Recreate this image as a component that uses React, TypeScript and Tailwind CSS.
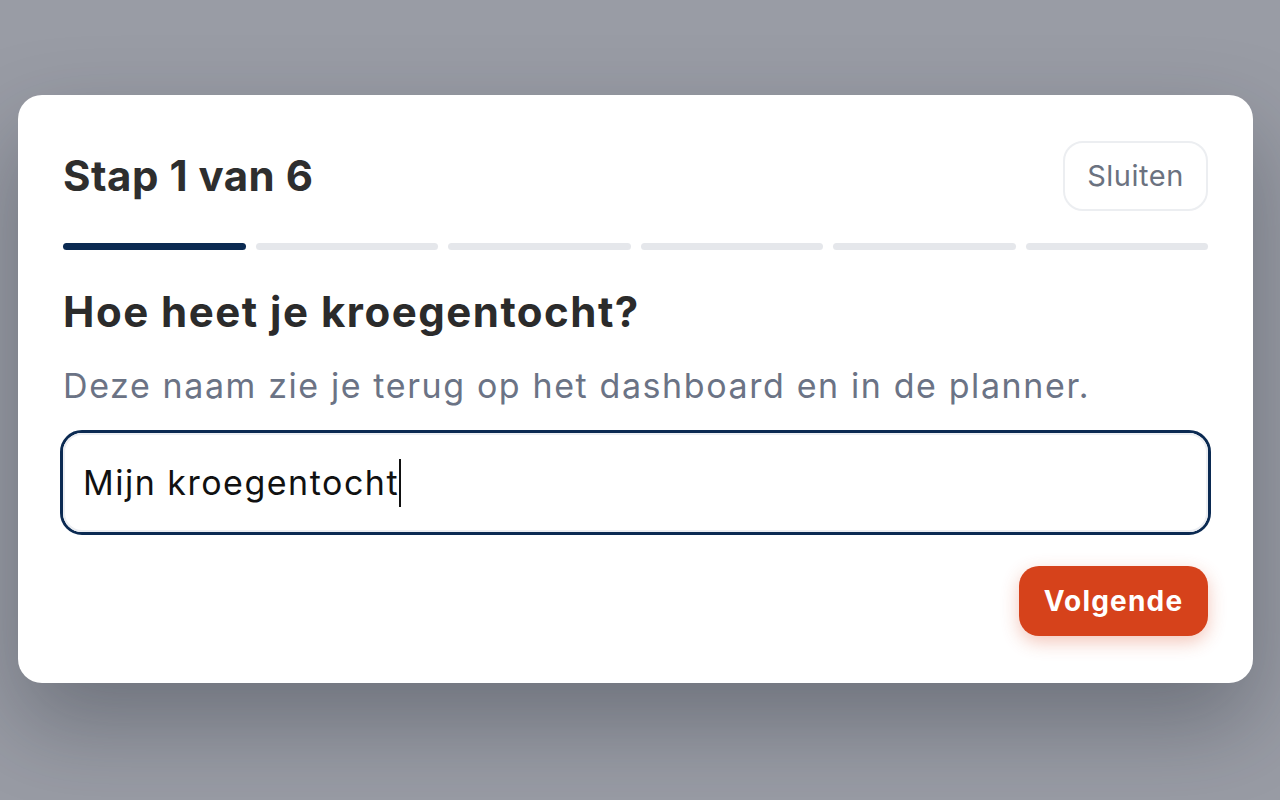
import React from 'react';

const steps = [1, 2, 3, 4, 5, 6];

const App: React.FC = () => {
  return (
    <div className="min-h-[800px] w-full bg-[#999ca5] pl-[18px] pt-[95px] font-['Inter',sans-serif]">
      <div className="w-[1235px] rounded-[24px] bg-white px-[45px] pt-[46px] pb-[47px] shadow-[0_40px_90px_rgba(30,35,45,0.35)]">
        {/* header */}
        <div className="flex items-center justify-between">
          <h2 className="text-[42px] font-bold leading-none tracking-[0.5px] text-[#2e2e2e]">Stap 1 van 6</h2>
          <button className="h-[70px] w-[145px] rounded-[20px] border-2 border-[#eceef1] text-[29px] tracking-[0.5px] text-[#6b7280]">
            Sluiten
          </button>
        </div>

        {/* progress */}
        <div className="mt-[32px] flex gap-[10px]">
          {steps.map((s) => (
            <div
              key={s}
              className={s === 1 ? 'h-[7px] flex-1 rounded-full bg-[#0b2a52]' : 'h-[7px] flex-1 rounded-full bg-[#e5e7eb]'}
            />
          ))}
        </div>

        <h3 className="mt-[38px] text-[42px] font-bold leading-[48px] tracking-[1.5px] text-[#2b2b2b]">
          Hoe heet je kroegentocht?
        </h3>
        <p className="mt-[28px] text-[34px] leading-[44px] tracking-[1.6px] text-[#6b7385]">
          Deze naam zie je terug op het dashboard en in de planner.
        </p>

        {/* input */}
        <div className="mt-[22px] -mx-[3px] flex h-[105px] items-center rounded-[22px] border-[3px] border-[#0b2a52]">
          <div className="flex h-full w-full items-center rounded-[19px] border-2 border-[#eceef2] px-[18px]">
            <span className="text-[34px] tracking-[1.5px] text-[#111]">Mijn kroegentocht</span>
            <span className="h-[48px] w-[2px] bg-[#111]" />
          </div>
        </div>

        <div className="mt-[31px] flex justify-end">
          <button className="h-[70px] w-[189px] rounded-[20px] bg-[#d6421b] text-[28px] font-bold tracking-[1.2px] text-white shadow-[0_6px_18px_rgba(214,66,27,0.3)]">
            Volgende
          </button>
        </div>
      </div>
    </div>
  );
};

export default App;
